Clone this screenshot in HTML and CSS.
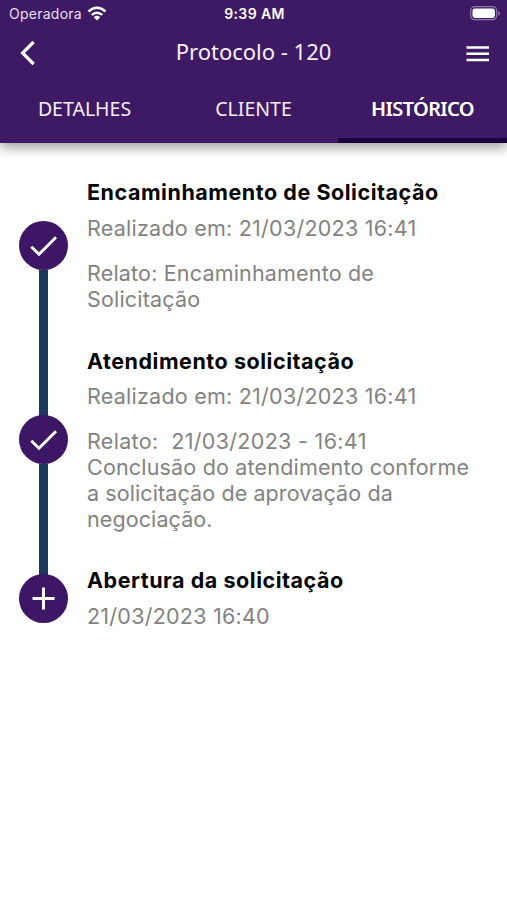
FILE: index.html
```html
<!DOCTYPE html>
<html lang="pt-BR">
<head>
<meta charset="utf-8">
<meta name="viewport" content="width=device-width, initial-scale=1">
<title>Protocolo - 120</title>
<link rel="stylesheet" href="styles.css">
</head>
<body>
<header class="header">
  <div class="status">
    <div class="carrier"><span class="carrier-name">Operadora</span>
      <svg class="wifi" width="20" height="15" viewBox="0 0 20 15" fill="none" stroke="#fff" stroke-width="2.4"><path d="M1.5 5.5Q10-2 18.5 5.5M4.7 8.9Q10 4.4 15.3 8.9"/><path d="M6.8 11.2Q10 8.5 13.2 11.2L10 14.4Z" fill="#fff" stroke="none"/></svg>
    </div>
    <span class="time">9:39 AM</span>
    <svg class="battery" width="31" height="15" viewBox="0 0 31 15"><rect x=".7" y=".7" width="26" height="13" rx="4" fill="none" stroke="#8d78a9" stroke-width="1.2"/><rect x="2.5" y="2.4" width="22.4" height="9.6" rx="2.4" fill="#fff"/><path d="M28.3 5v4.8Q30 9.3 30 7.4T28.3 5Z" fill="#8d78a9"/></svg>
  </div>
  <div class="bar">
    <svg class="back" width="16" height="26" viewBox="0 0 16 26" fill="none" stroke="#fff" stroke-width="3.2"><path d="M13.6 2L2.6 13L13.6 24"/></svg>
    <h1 class="title">Protocolo - 120</h1>
    <svg class="menu" width="24" height="18" viewBox="0 0 24 18" stroke="#fff" stroke-width="2.5"><path d="M.5 2.5H23M.5 8.8H23M.5 15.1H23"/></svg>
  </div>
  <nav class="tabs">
    <a class="tab">DETALHES</a>
    <a class="tab">CLIENTE</a>
    <a class="tab active">HISTÓRICO</a>
  </nav>
</header>
<main class="timeline">
  <section class="item">
    <div class="rail"><span class="line hidden"></span>
      <span class="dot"><svg width="49" height="49" viewBox="0 0 49 49" fill="none" stroke="#fff" stroke-width="2.9"><path d="M12.3 25.8L20 33.3L37 16.2"/></svg></span>
      <span class="line"></span></div>
    <div class="content">
      <h2 class="heading">Encaminhamento de Solicitação</h2>
      <p class="date">Realizado em: 21/03/2023 16:41</p>
      <p class="report">Relato: Encaminhamento de<br>Solicitação</p>
    </div>
  </section>
  <section class="item">
    <div class="rail"><span class="line"></span>
      <span class="dot"><svg width="49" height="49" viewBox="0 0 49 49" fill="none" stroke="#fff" stroke-width="2.9"><path d="M12.3 25.8L20 33.3L37 16.2"/></svg></span>
      <span class="line"></span></div>
    <div class="content">
      <h2 class="heading">Atendimento solicitação</h2>
      <p class="date">Realizado em: 21/03/2023 16:41</p>
      <p class="report"><span class="stamp">Relato:&nbsp; 21/03/2023 - 16:41</span><br>Conclusão do atendimento conforme<br><span class="tight">a solicitação de aprovação da<br>negociação.</span></p>
    </div>
  </section>
  <section class="item">
    <div class="rail"><span class="line"></span>
      <span class="dot"><svg width="49" height="49" viewBox="0 0 49 49" fill="none" stroke="#fff" stroke-width="2.9"><path d="M13.5 24.5H35.5M24.5 13.5V35.5"/></svg></span>
      <span class="line hidden"></span></div>
    <div class="content">
      <h2 class="heading">Abertura da solicitação</h2>
      <p class="date">21/03/2023 16:40</p>
    </div>
  </section>
</main>
</body>
</html>
```
FILE: styles.css
```css
* { box-sizing: border-box; }
body { margin: 0; height: 900px; overflow: hidden; background: #fff; font-family: Inter, "Liberation Sans", sans-serif; }
h1, h2, p { margin: 0; }
svg { display: block; }
.header { height: 142.5px; background: #3e1a64; color: #fff; box-shadow: 0 5px 11px rgba(0, 0, 0, .36); }
.status { height: 27px; display: grid; grid-template-columns: 1fr auto 1fr; align-items: center; padding: 0 6px 0 9px; }
.carrier { display: flex; align-items: center; gap: 5px; }
.carrier-name { font-size: 14px; letter-spacing: .25px; color: #e9dff2; }
.wifi { margin-top: -1px; }
.time { font-size: 14px; font-weight: 600; letter-spacing: .4px; margin-left: -1px; }
.battery { justify-self: end; margin-top: -1px; }
.bar { height: 48px; display: grid; grid-template-columns: 60px 1fr 60px; align-items: center; }
.back { margin: 4px 0 0 20px; }
.title { font: 400 22px/30px "Noto Sans", sans-serif; text-align: center; color: #f7eefb; }
.menu { justify-self: end; margin: 5px 17px 0 0; }
.tabs { height: 67.5px; display: grid; grid-template-columns: repeat(3, 1fr); }
.tab { display: flex; justify-content: center; align-items: center; padding-top: 6px; border-bottom: 5px solid transparent; font: 400 19.5px/26px "Noto Sans", sans-serif; color: #f7eefb; }
.tab.active { border-bottom-color: #1b0041; font-weight: 500; letter-spacing: -.2px; color: #fff; text-shadow: .4px 0 #fff; }
.timeline { padding-top: 19.9px; }
.item { display: grid; grid-template-columns: 87px 1fr; }
.rail { display: flex; flex-direction: column; align-items: center; }
.line { flex: 1; width: 9.5px; background: #1c395c; }
.line.hidden { visibility: hidden; }
.dot { position: relative; top: -1px; width: 49px; height: 49px; margin: -1px 0; border-radius: 50%; background: #3d1766; z-index: 1; }
.content { padding: 18px 0; font-size: 21.5px; line-height: 25.8px; }
.heading { font-size: 21.5px; font-weight: 700; line-height: 25.8px; letter-spacing: .54px; color: #050505; }
.date, .report { color: #828282; white-space: nowrap; }
.date { margin-top: 9.8px; letter-spacing: .24px; }
.report { margin-top: 19.2px; letter-spacing: .18px; }
.stamp { letter-spacing: .32px; }
.tight { letter-spacing: .1px; }
```
